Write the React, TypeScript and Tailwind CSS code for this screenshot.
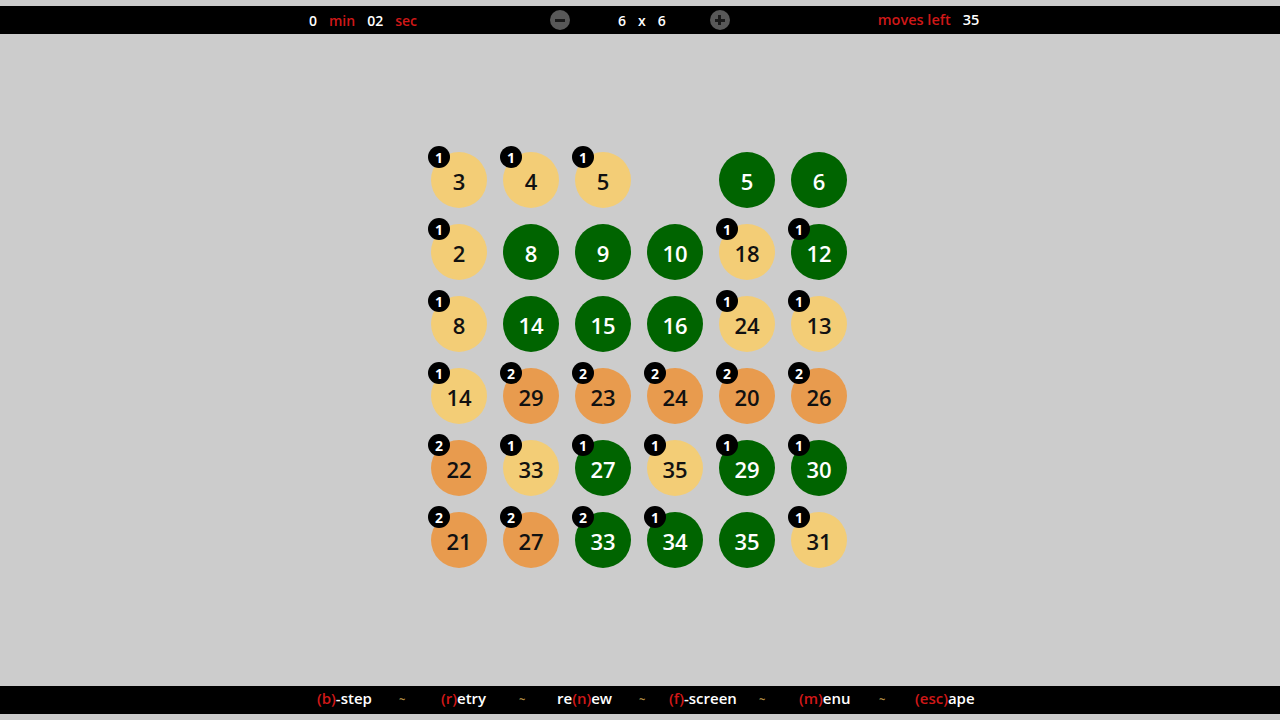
import React from "react";

type Cell = { n: number; c: "y" | "o" | "g"; b?: number } | null;

const rows: Cell[][] = [
  [{ n: 3, c: "y", b: 1 }, { n: 4, c: "y", b: 1 }, { n: 5, c: "y", b: 1 }, null, { n: 5, c: "g" }, { n: 6, c: "g" }],
  [{ n: 2, c: "y", b: 1 }, { n: 8, c: "g" }, { n: 9, c: "g" }, { n: 10, c: "g" }, { n: 18, c: "y", b: 1 }, { n: 12, c: "g", b: 1 }],
  [{ n: 8, c: "y", b: 1 }, { n: 14, c: "g" }, { n: 15, c: "g" }, { n: 16, c: "g" }, { n: 24, c: "y", b: 1 }, { n: 13, c: "y", b: 1 }],
  [{ n: 14, c: "y", b: 1 }, { n: 29, c: "o", b: 2 }, { n: 23, c: "o", b: 2 }, { n: 24, c: "o", b: 2 }, { n: 20, c: "o", b: 2 }, { n: 26, c: "o", b: 2 }],
  [{ n: 22, c: "o", b: 2 }, { n: 33, c: "y", b: 1 }, { n: 27, c: "g", b: 1 }, { n: 35, c: "y", b: 1 }, { n: 29, c: "g", b: 1 }, { n: 30, c: "g", b: 1 }],
  [{ n: 21, c: "o", b: 2 }, { n: 27, c: "o", b: 2 }, { n: 33, c: "g", b: 2 }, { n: 34, c: "g", b: 1 }, { n: 35, c: "g" }, { n: 31, c: "y", b: 1 }],
];

const colorCls = {
  y: "bg-[#f3cd76] text-[#111111]",
  o: "bg-[#e89b4e] text-[#111111]",
  g: "bg-[#006400] text-white",
};

function Red({ children }: { children: React.ReactNode }) {
  return <span className="text-[#d01818]">{children}</span>;
}

function Tilde({ w }: { w: string }) {
  return (
    <div className={`${w} shrink-0 text-[#b08c44] text-[11px] font-bold leading-none`}>~</div>
  );
}

export default function App() {
  return (
    <div
      className="w-[1280px] h-[720px] bg-[#cccccc] flex flex-col overflow-hidden"
      style={{ fontFamily: '"Open Sans", "Noto Sans", sans-serif' }}
    >
      <div className="h-[6px]" />
      <div className="h-[28px] bg-black flex items-center text-[14px] font-semibold text-white">
        <div className="ml-[309px] flex items-center w-[112px]">
          <span>0</span>
          <span className="ml-[12px] text-[#d01818]">min</span>
          <span className="ml-[12px]">02</span>
          <span className="ml-[12px] text-[#d01818]">sec</span>
        </div>
        <div className="ml-[129px] flex items-center">
          <div className="w-[20px] h-[20px] rounded-full bg-[#585858] flex items-center justify-center">
            <div className="w-[10px] h-[3px] bg-[#1a1a1a]" />
          </div>
          <div className="ml-[48px] flex items-center gap-[12px]">
            <span>6</span>
            <span>x</span>
            <span>6</span>
          </div>
          <div className="ml-[44px] w-[20px] h-[20px] rounded-full bg-[#585858] relative">
            <div className="absolute left-[5px] top-[8.5px] w-[10px] h-[3px] bg-[#1a1a1a]" />
            <div className="absolute left-[8.5px] top-[5px] w-[3px] h-[10px] bg-[#1a1a1a]" />
          </div>
        </div>
        <div className="ml-[148px] flex items-center text-[14.5px]">
          <span className="text-[#d01818]">moves left</span>
          <span className="ml-[12px]">35</span>
        </div>
      </div>

      <div className="flex-1 flex items-center justify-center">
        <div className="grid grid-cols-6 w-[432px] ml-[-2px]">
          {rows.flat().map((cell, i) => (
            <div key={i} className="w-[72px] h-[72px] relative">
              {cell && (
                <>
                  <div
                    className={`absolute left-[8px] top-[8px] w-[56px] h-[56px] rounded-full flex items-center justify-center pt-[3px] text-[22px] font-semibold ${colorCls[cell.c]}`}
                  >
                    {cell.n}
                  </div>
                  {cell.b && (
                    <div className="absolute left-[5px] top-[2px] w-[22px] h-[22px] rounded-full bg-black text-white text-[14px] font-bold flex items-center justify-center">
                      {cell.b}
                    </div>
                  )}
                </>
              )}
            </div>
          ))}
        </div>
      </div>

      <div className="h-[28px] bg-black flex items-center text-[15px] font-semibold text-white pb-[3px]">
        <div className="ml-[317px] w-[82px] shrink-0">
          <Red>(b)</Red>-step
        </div>
        <Tilde w="w-[42px]" />
        <div className="w-[78px] shrink-0">
          <Red>(r)</Red>etry
        </div>
        <Tilde w="w-[38px]" />
        <div className="w-[82px] shrink-0">
          re<Red>(n)</Red>ew
        </div>
        <Tilde w="w-[30px]" />
        <div className="w-[90px] shrink-0">
          <Red>(f)</Red>-screen
        </div>
        <Tilde w="w-[40px]" />
        <div className="w-[80px] shrink-0">
          <Red>(m)</Red>enu
        </div>
        <Tilde w="w-[36px]" />
        <div className="shrink-0">
          <Red>(esc)</Red>ape
        </div>
      </div>
      <div className="h-[6px]" />
    </div>
  );
}
